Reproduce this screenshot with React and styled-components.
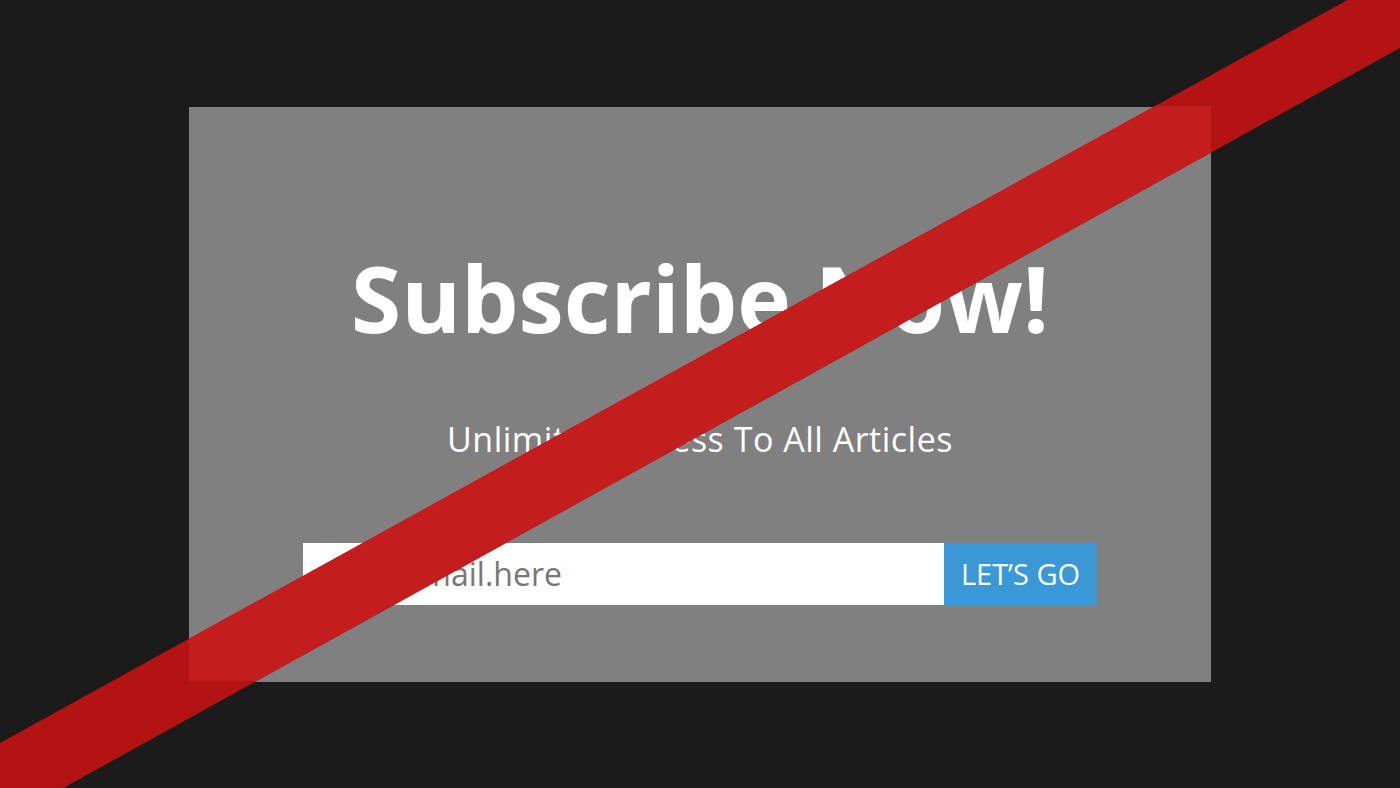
import React from 'react';
import styled, { createGlobalStyle } from 'styled-components';

const GlobalStyle = createGlobalStyle`
	html, body {
		margin: 0;
		padding: 0;
		background: #1b1b1b;
	}
	* {
		box-sizing: border-box;
	}
`;

const STRIPE = '0,743 1400,-29 1400,48 0,823';

const App = () => {
	return (
		<Page>
			<GlobalStyle />

			<Panel>
				<Title>Subscribe Now!</Title>
				<Subtitle>Unlimited Access To All Articles</Subtitle>

				<Form onSubmit={(e) => e.preventDefault()}>
					<EmailInput type="email" placeholder="your.email.here" />
					<GoButton type="submit">LET’S GO</GoButton>
				</Form>
			</Panel>

			{/* the big "no" stripe drawn over everything */}
			<Stripe viewBox="0 0 1400 788" preserveAspectRatio="none">
				<defs>
					<clipPath id="panelClip">
						<rect x="189" y="106" width="1022" height="575" />
					</clipPath>
				</defs>
				<polygon points={STRIPE} fill="#b31313" />
				<polygon points={STRIPE} fill="#c41d1e" clipPath="url(#panelClip)" />
			</Stripe>
		</Page>
	);
};

const Page = styled.div`
	position: relative;
	width: 100%;
	height: 788px;
	display: flex;
	align-items: center;
	justify-content: center;
	overflow: hidden;
	background: #1b1b1b;
	font-family: 'Open Sans', 'Liberation Sans', sans-serif;
`;

const Panel = styled.div`
	width: 1022px;
	height: 575px;
	background: #808080;
	display: flex;
	flex-direction: column;
	align-items: center;
	padding-top: 146px;
`;

const Title = styled.h1`
	margin: 0;
	color: #fff;
	font-size: 91px;
	font-weight: 700;
	line-height: 1;
`;

const Subtitle = styled.p`
	margin: 78px 0 0;
	color: #fff;
	font-size: 34px;
	font-weight: 400;
	line-height: 1;
	letter-spacing: 0.5px;
`;

const Form = styled.form`
	display: flex;
	width: 794px;
	height: 62px;
	margin-top: 87px;
`;

const EmailInput = styled.input`
	all: unset;
	flex: 1;
	background: #fff;
	padding: 0 24px;
	font-family: inherit;
	font-size: 32px;
	color: #333;

	&::placeholder {
		color: #777;
	}
`;

const GoButton = styled.button`
	all: unset;
	width: 153px;
	background: #3a98d6;
	color: #fff;
	font-family: inherit;
	font-size: 29px;
	text-align: center;
	cursor: pointer;
`;

const Stripe = styled.svg`
	position: absolute;
	inset: 0;
	width: 100%;
	height: 100%;
	pointer-events: none;
`;

export default App;
